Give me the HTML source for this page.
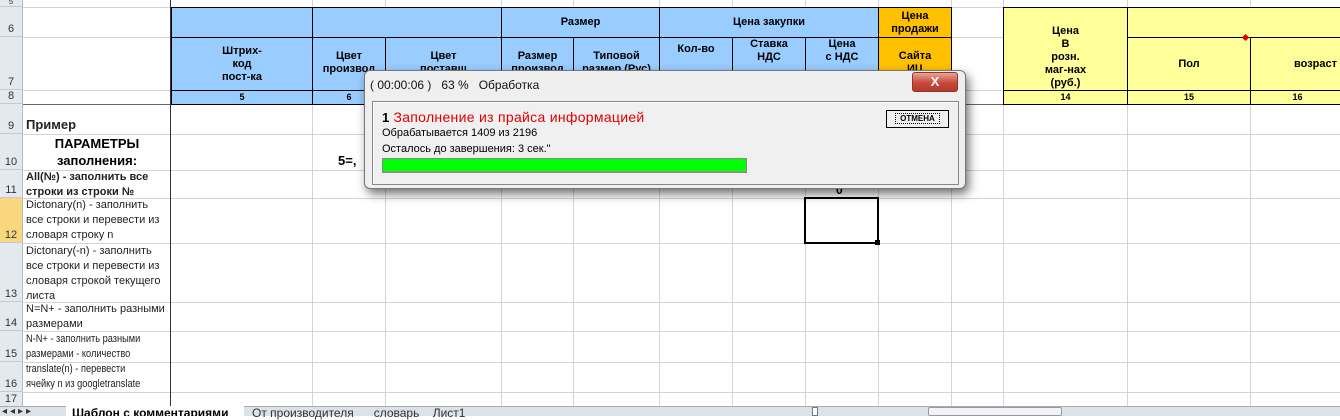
<!DOCTYPE html>
<html><head><meta charset="utf-8"><style>
*{margin:0;padding:0;box-sizing:border-box}
body{width:1340px;height:416px;overflow:hidden;background:#fff;position:relative;font-family:"Liberation Sans",Arial,sans-serif;font-size:11px;color:#000}
.a{position:absolute}
.v{position:absolute;width:1px;background:#d4d4d4}
.h{position:absolute;height:1px;background:#d4d4d4}
.rh{position:absolute;left:0;width:23px;background:#e4e8ef;color:#333;font-size:11px;text-align:center;border-bottom:1px solid #c5c9d0;border-right:1px solid #b6bac0;display:flex;align-items:flex-end;justify-content:center;padding-bottom:1px}
.c{position:absolute;display:flex;align-items:center;justify-content:center;text-align:center;font-weight:bold;font-size:11px;line-height:13px;border:1px solid #000;overflow:hidden}
.bl{background:#99ccff}.or{background:#ffc000}.ye{background:#ffff99}
.t{position:absolute;left:26px;font-size:11px;line-height:15px;color:#222}
</style></head><body>
<div class="v" style="left:312px;top:0;height:406px"></div>
<div class="v" style="left:385px;top:0;height:406px"></div>
<div class="v" style="left:501px;top:0;height:406px"></div>
<div class="v" style="left:573px;top:0;height:406px"></div>
<div class="v" style="left:659px;top:0;height:406px"></div>
<div class="v" style="left:732px;top:0;height:406px"></div>
<div class="v" style="left:805px;top:0;height:406px"></div>
<div class="v" style="left:878px;top:0;height:406px"></div>
<div class="v" style="left:951px;top:0;height:406px"></div>
<div class="v" style="left:1003px;top:0;height:406px"></div>
<div class="v" style="left:1127px;top:0;height:406px"></div>
<div class="v" style="left:1250px;top:0;height:406px"></div>
<div class="h" style="left:0;width:1340px;top:7px"></div>
<div class="h" style="left:0;width:1340px;top:37px"></div>
<div class="h" style="left:0;width:1340px;top:90px"></div>
<div class="h" style="left:0;width:1340px;top:134px"></div>
<div class="h" style="left:0;width:1340px;top:170px"></div>
<div class="h" style="left:0;width:1340px;top:198px"></div>
<div class="h" style="left:0;width:1340px;top:243px"></div>
<div class="h" style="left:0;width:1340px;top:302px"></div>
<div class="h" style="left:0;width:1340px;top:331px"></div>
<div class="h" style="left:0;width:1340px;top:362px"></div>
<div class="h" style="left:0;width:1340px;top:392px"></div>
<div class="a" style="left:0;top:104px;width:1340px;height:1px;background:#666"></div>
<div class="a" style="left:170px;top:0;width:1px;height:406px;background:#333"></div>
<div class="rh" style="top:0;height:7px;font-size:8px;line-height:4px;overflow:hidden;align-items:flex-start">5</div>
<div class="rh" style="top:7px;height:30px">6</div>
<div class="rh" style="top:37px;height:53px">7</div>
<div class="rh" style="top:90px;height:14px;line-height:12px">8</div>
<div class="rh" style="top:104px;height:30px">9</div>
<div class="rh" style="top:134px;height:36px">10</div>
<div class="rh" style="top:170px;height:28px">11</div>
<div class="rh" style="top:198px;height:45px;background:#f9d77e">12</div>
<div class="rh" style="top:243px;height:59px">13</div>
<div class="rh" style="top:302px;height:29px">14</div>
<div class="rh" style="top:331px;height:31px">15</div>
<div class="rh" style="top:362px;height:30px">16</div>
<div class="rh" style="top:392px;height:15px">17</div>
<div class="c bl" style="left:171px;top:7px;width:142px;height:31px"></div>
<div class="c bl" style="left:312px;top:7px;width:190px;height:31px"></div>
<div class="c bl" style="left:501px;top:7px;width:159px;height:31px">Размер</div>
<div class="c bl" style="left:659px;top:7px;width:220px;height:31px">Цена закупки</div>
<div class="c or" style="left:878px;top:7px;width:74px;height:31px">Цена<br>продажи</div>
<div class="c bl" style="left:171px;top:37px;width:142px;height:54px">Штрих-<br>код<br>пост-ка</div>
<div class="c bl" style="left:312px;top:37px;width:74px;height:54px;align-items:flex-start;padding-top:12px">Цвет<br>производ</div>
<div class="c bl" style="left:385px;top:37px;width:117px;height:54px;align-items:flex-start;padding-top:12px">Цвет<br>поставщ</div>
<div class="c bl" style="left:501px;top:37px;width:73px;height:54px;align-items:flex-start;padding-top:12px">Размер<br>производ</div>
<div class="c bl" style="left:573px;top:37px;width:87px;height:54px;align-items:flex-start;padding-top:12px">Типовой<br>размер (Рус)</div>
<div class="c bl" style="left:659px;top:37px;width:74px;height:54px;align-items:flex-start;padding-top:5px">Кол-во</div>
<div class="c bl" style="left:732px;top:37px;width:74px;height:54px;align-items:flex-start;padding-top:0">Ставка<br>НДС</div>
<div class="c bl" style="left:805px;top:37px;width:74px;height:54px;align-items:flex-start;padding-top:0">Цена<br>с НДС</div>
<div class="c or" style="left:878px;top:37px;width:74px;height:54px;align-items:flex-start;padding-top:12px">Сайта<br>ИЦ</div>
<div class="c bl" style="left:171px;top:90px;width:142px;height:15px;font-size:9px">5</div>
<div class="c bl" style="left:312px;top:90px;width:74px;height:15px;font-size:9px">6</div>
<div class="c bl" style="left:385px;top:90px;width:117px;height:15px"></div>
<div class="c bl" style="left:501px;top:90px;width:73px;height:15px"></div>
<div class="c bl" style="left:573px;top:90px;width:87px;height:15px"></div>
<div class="c bl" style="left:659px;top:90px;width:74px;height:15px"></div>
<div class="c bl" style="left:732px;top:90px;width:74px;height:15px"></div>
<div class="c bl" style="left:805px;top:90px;width:74px;height:15px"></div>
<div class="c or" style="left:878px;top:90px;width:74px;height:15px"></div>
<div class="c ye" style="left:1003px;top:7px;width:125px;height:84px;align-items:flex-end;padding-bottom:0">Цена<br>В<br>розн.<br>маг-нах<br>(руб.)</div>
<div class="c ye" style="left:1127px;top:7px;width:220px;height:31px"></div>
<div class="c ye" style="left:1127px;top:37px;width:124px;height:54px">Пол</div>
<div class="c ye" style="left:1250px;top:37px;width:95px;height:54px;justify-content:flex-start;padding-left:43px">возраст</div>
<div class="c ye" style="left:1003px;top:90px;width:125px;height:15px;font-size:9px">14</div>
<div class="c ye" style="left:1127px;top:90px;width:124px;height:15px;font-size:9px">15</div>
<div class="c ye" style="left:1250px;top:90px;width:95px;height:15px;font-size:9px">16</div>
<div class="a" style="left:1243px;top:35px;width:5px;height:5px;background:#d00;transform:rotate(45deg)"></div>
<div class="t" style="top:117px;font-weight:bold;font-size:13px">Пример</div>
<div class="a" style="left:23px;top:135px;width:148px;text-align:center;font-weight:bold;font-size:13px;line-height:17px">ПАРАМЕТРЫ<br>заполнения:</div>
<div class="a" style="left:338px;top:153px;font-weight:bold;font-size:13px">5=,</div>
<div class="t" style="top:170px;font-weight:bold">All(№) - заполнить все<br>строки из строки №</div>
<div class="t" style="top:198px">Dictonary(n) - заполнить<br>все строки и перевести из<br>словаря строку n</div>
<div class="t" style="top:244px">Dictonary(-n) - заполнить<br>все строки и перевести из<br>словаря строкой текущего<br>листа</div>
<div class="t" style="top:302px">N=N+ - заполнить разными<br>размерами</div>
<div class="t" style="top:332px;transform:scaleX(0.84);transform-origin:0 0;white-space:nowrap">N-N+ - заполнить разными<br>размерами - количество</div>
<div class="t" style="top:362px;transform:scaleX(0.84);transform-origin:0 0;white-space:nowrap">translate(n) - перевести<br>ячейку n из googletranslate</div>
<div class="a" style="left:804px;top:197px;width:75px;height:47px;border:2px solid #000"></div>
<div class="a" style="left:875px;top:240px;width:5px;height:5px;background:#000"></div>
<div class="a" style="left:836px;top:183px;font-weight:bold;font-size:12px">0</div>
<div class="a" style="left:364px;top:70px;width:602px;height:119px;background:#efefef;border:1px solid #777;border-radius:6px;box-shadow:3px 5px 10px rgba(0,0,0,.55)">
 <div class="a" style="left:5px;top:7px;font-size:12px;color:#111">( 00:00:06 )&nbsp;&nbsp;&nbsp;63 %&nbsp;&nbsp;&nbsp;Обработка</div>
 <div class="a" style="left:547px;top:1px;width:46px;height:20px;border:1px solid #8a3a2a;border-radius:3px;background:linear-gradient(#e9a595,#c9493a 55%,#b63a2c);color:#fff;font-weight:bold;text-align:center;font-size:13px;line-height:18px">X</div>
 <div class="a" style="left:7px;top:30px;width:587px;height:84px;border:1px solid #888;box-shadow:inset 1px 1px 0 #fff;background:#f0f0f0">
  <div class="a" style="left:9px;top:7px;font-size:14px;color:#e00000;letter-spacing:0.3px"><b style="color:#000;font-size:13px">1 </b>Заполнение из прайса информацией</div>
  <div class="a" style="left:9px;top:25px;font-size:11px">Обрабатывается 1409 из 2196</div>
  <div class="a" style="left:9px;top:41px;font-size:11px">Осталось до завершения: 3 сек."</div>
  <div class="a" style="left:9px;top:56px;width:365px;height:15px;border:1px solid #888;background:#0f0;box-shadow:inset 0 -1px 0 #7a7"></div>
  <div class="a" style="left:513px;top:8px;width:63px;height:18px;border:1px solid #000;background:#f0f0f0;font-size:8px;font-weight:bold;text-align:center;line-height:15px"><span style="border:1px dotted #000;padding:0 4px">ОТМЕНА</span></div>
 </div>
</div>
<div class="a" style="left:0;top:406px;width:1340px;height:10px;background:#dde1e8;border-top:1px solid #aab"></div>
<div class="a" style="left:2px;top:406px;font-size:10px;color:#333;letter-spacing:3px">◂◂▸▸</div>
<div class="a" style="left:66px;top:406px;width:178px;height:10px;background:#fff;font-weight:bold;font-size:12px;line-height:14px;padding-left:6px;overflow:hidden">Шаблон с комментариями</div>
<div class="a" style="left:252px;top:406px;font-size:12px;line-height:14px;color:#333">От производителя&nbsp;&nbsp;&nbsp;&nbsp;&nbsp;&nbsp;словарь&nbsp;&nbsp;&nbsp;&nbsp;Лист1</div>
<div class="a" style="left:812px;top:407px;width:6px;height:9px;border:1px solid #777;background:#fff"></div>
<div class="a" style="left:928px;top:407px;width:134px;height:9px;border:1px solid #999;border-radius:2px;background:#f2f3f6"></div>
</body></html>
